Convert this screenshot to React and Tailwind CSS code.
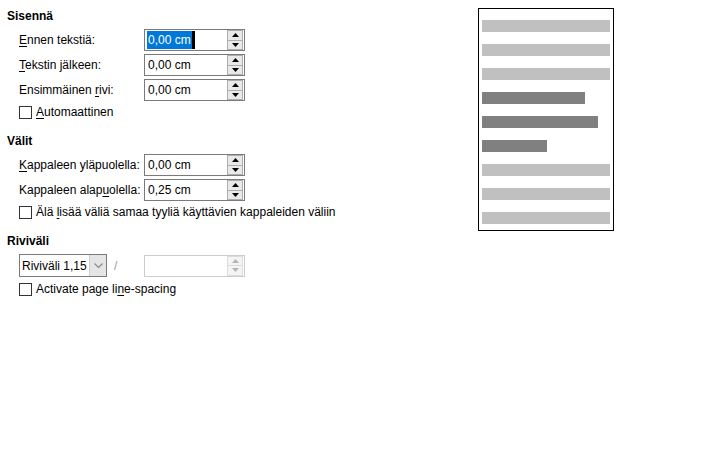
import React from 'react';

const font = { fontFamily: '"Liberation Sans", Arial, sans-serif' };

function U({ children }) {
  return <span className="underline underline-offset-2">{children}</span>;
}

function Arrows({ disabled }) {
  const c = disabled ? '#b4b4b4' : '#000';
  return (
    <div className={`flex flex-col w-[16px] h-[20px] border ${disabled ? 'border-[#dcdcdc] bg-[#f4f4f4]' : 'border-[#adadad] bg-[#e9e9e9]'}`}>
      <div className={`flex-1 flex items-center justify-center border-b ${disabled ? 'border-[#dcdcdc]' : 'border-[#adadad]'}`}>
        <svg width="7" height="4" viewBox="0 0 7 4"><path d="M0 4 L3.5 0 L7 4 Z" fill={c} /></svg>
      </div>
      <div className="flex-1 flex items-center justify-center">
        <svg width="7" height="4" viewBox="0 0 7 4"><path d="M0 0 L3.5 4 L7 0 Z" fill={c} /></svg>
      </div>
    </div>
  );
}

function Spin({ value, selected, disabled }) {
  return (
    <div className={`flex items-center justify-between w-[101px] h-[22px] pl-[2px] pr-[1px] bg-white border ${disabled ? 'border-[#cccccc]' : 'border-[#7a7a7a]'}`}>
      {selected ? (
        <span className="flex items-center h-[18px]">
          <span className="bg-[#0078d7] text-white h-[18px] leading-[18px] pl-[1px] pr-[1px]">{value}</span>
          <span className="w-[3px] h-[18px] bg-black" />
        </span>
      ) : (
        <span className="pl-[1px]">{value}</span>
      )}
      <Arrows disabled={disabled} />
    </div>
  );
}

function Row({ label, value, selected }) {
  return (
    <div className="flex items-center h-[22px]">
      <div className="w-[125px] whitespace-nowrap">{label}</div>
      <Spin value={value} selected={selected} />
    </div>
  );
}

function Check({ children, className = '' }) {
  return (
    <div className={`flex items-center h-4 gap-[4px] whitespace-nowrap ${className}`}>
      <span className="w-[13px] h-[13px] border border-[#333] bg-white" />
      <span>{children}</span>
    </div>
  );
}

function Heading({ children, className = '' }) {
  return <div className={`h-4 leading-4 font-bold ${className}`}>{children}</div>;
}

export default function App() {
  const bars = [
    { w: 'w-[128px]', c: 'bg-[#c0c0c0]' },
    { w: 'w-[128px]', c: 'bg-[#c0c0c0]' },
    { w: 'w-[128px]', c: 'bg-[#c0c0c0]' },
    { w: 'w-[103px]', c: 'bg-[#808080]' },
    { w: 'w-[116px]', c: 'bg-[#808080]' },
    { w: 'w-[65px]', c: 'bg-[#808080]' },
    { w: 'w-[128px]', c: 'bg-[#c0c0c0]' },
    { w: 'w-[128px]', c: 'bg-[#c0c0c0]' },
    { w: 'w-[128px]', c: 'bg-[#c0c0c0]' },
  ];

  return (
    <div className="w-[725px] h-[453px] bg-white text-black text-[12px] leading-4 overflow-hidden" style={font}>
      <div className="flex pl-[7px] pt-[8px]">
        <div className="w-[471px] flex flex-col">
          <Heading>Sisennä</Heading>
          <div className="flex flex-col gap-[3px] pl-[12px] mt-[5px]">
            <Row label={<><U>E</U>nnen tekstiä:</>} value="0,00 cm" selected />
            <Row label={<><U>T</U>ekstin jälkeen:</>} value="0,00 cm" />
            <Row label={<>Ensimmäinen <U>r</U>ivi:</>} value="0,00 cm" />
            <Check><U>A</U>utomaattinen</Check>
          </div>

          <Heading className="mt-[13px]">Välit</Heading>
          <div className="flex flex-col gap-[3px] pl-[12px] mt-[5px]">
            <Row label={<><U>K</U>appaleen yläpuolella:</>} value="0,00 cm" />
            <Row label={<>Kappaleen alap<U>u</U>olella:</>} value="0,25 cm" />
            <Check>Älä <U>l</U>isää väliä samaa tyyliä käyttävien kappaleiden väliin</Check>
          </div>

          <Heading className="mt-[13px]">Riviväli</Heading>
          <div className="flex flex-col pl-[12px] mt-[5px]">
            <div className="flex items-center h-[23px]">
              <div className="flex items-center w-[88px] h-[23px] border border-[#7a7a7a] bg-white">
                <span className="flex-1 pl-[2px] whitespace-nowrap">Riviväli 1,15</span>
                <span className="w-[17px] h-[21px] bg-[#e5e5e5] border-l border-[#cfcfcf] flex items-center justify-center">
                  <svg width="9" height="6" viewBox="0 0 9 6"><path d="M0.5 0.5 L4.5 4.5 L8.5 0.5" stroke="#8a8a8a" strokeWidth="1.2" fill="none" /></svg>
                </span>
              </div>
              <span className="w-[37px] pl-[7px] text-[#9a9a9a]">/</span>
              <Spin value="" disabled />
            </div>
            <Check className="mt-[4px]">Activate page li<U>n</U>e-spacing</Check>
          </div>
        </div>

        <div className="w-[136px] h-[223px] border border-black flex flex-col gap-[12px] pt-[11px] pl-[3px]">
          {bars.map((b, i) => (
            <div key={i} className={`h-[12px] ${b.w} ${b.c}`} />
          ))}
        </div>
      </div>
    </div>
  );
}
